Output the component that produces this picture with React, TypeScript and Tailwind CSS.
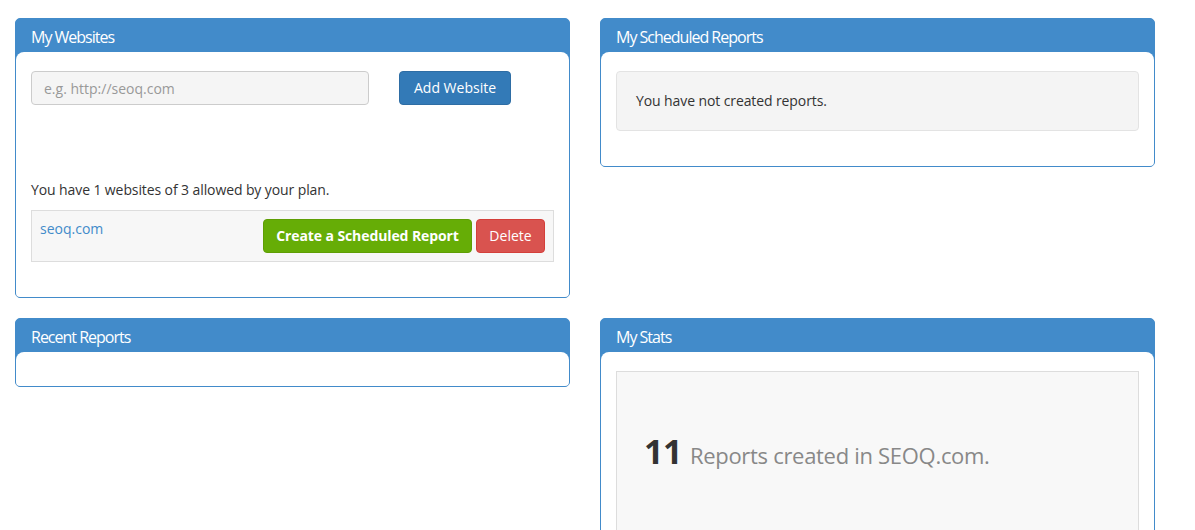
import React from "react";

const FONT = "font-['Open_Sans',sans-serif]";

function Panel({
  title,
  children,
  bodyClass = "",
}: {
  title: string;
  children?: React.ReactNode;
  bodyClass?: string;
}) {
  return (
    <div className="rounded-[5px] border border-[#428bca] bg-[#428bca] overflow-hidden">
      <div className="h-[33px] px-[15px] pt-[3px] leading-[30px] text-[16px] tracking-[-1px] text-white">
        {title}
      </div>
      <div className={`bg-white rounded-t-[8px] ${bodyClass}`}>{children}</div>
    </div>
  );
}

export default function App() {
  return (
    <div className={`${FONT} text-[14px] leading-[20px] tracking-[-0.1px] text-[#333] bg-white h-[530px] overflow-hidden pt-[18px] pl-[15px]`}>
      {/* Row one */}
      <div className="flex items-start gap-[30px]">
        <div className="w-[555px]">
          <Panel title="My Websites" bodyClass="px-[15px] pt-[19px] pb-[35px]">
            <div className="flex items-center gap-[30px]">
              <input
                placeholder="e.g. http://seoq.com"
                className="w-[338px] h-[34px] px-[12px] rounded-[4px] border border-[#ccc] bg-[#f5f5f5] text-[14px] tracking-normal text-[#555] placeholder:text-[#999] outline-none"
              />
              <button className="w-[112px] h-[34px] rounded-[4px] border border-[#2e6da4] bg-[#337ab7] text-white text-[14px] tracking-normal">
                Add Website
              </button>
            </div>
            <p className="mt-[75px]">You have 1 websites of 3 allowed by your plan.</p>
            <div className="mt-[10px] flex items-start justify-between border border-[#ddd] bg-[#f7f7f7] p-[8px]">
              <a className="text-[#428bca] tracking-normal">seoq.com</a>
              <div className="flex gap-[4px]">
                <button className="h-[34px] w-[209px] whitespace-nowrap rounded-[4px] border border-[#5f9e04] bg-[#66ad06] text-white font-bold text-[14px] tracking-[-0.1px]">
                  Create a Scheduled Report
                </button>
                <button className="h-[34px] w-[69px] rounded-[4px] border border-[#d43f3a] bg-[#d9534f] text-white text-[14px] tracking-normal">
                  Delete
                </button>
              </div>
            </div>
          </Panel>
        </div>
        <div className="w-[555px]">
          <Panel title="My Scheduled Reports" bodyClass="px-[15px] pt-[19px] pb-[35px]">
            <div className="rounded-[4px] border border-[#e3e3e3] bg-[#f4f4f4] px-[19px] py-[19px]">
              You have not created reports.
            </div>
          </Panel>
        </div>
      </div>

      {/* Row two */}
      <div className="mt-[20px] flex items-start gap-[30px]">
        <div className="w-[555px]">
          <Panel title="Recent Reports" bodyClass="h-[34px]" />
        </div>
        <div className="w-[555px]">
          <Panel title="My Stats" bodyClass="px-[15px] pt-[19px] pb-[35px]">
            <div className="h-[240px] border border-[#ddd] bg-[#f8f8f8] pl-[27px] pt-[62px]">
              <div className="flex items-baseline gap-[8px] leading-none">
                <span className="text-[34px] font-bold tracking-[-0.5px] text-[#333]">11</span>
                <span className="text-[22px] tracking-[-0.3px] text-[#888]">Reports created in SEOQ.com.</span>
              </div>
            </div>
          </Panel>
        </div>
      </div>
    </div>
  );
}
